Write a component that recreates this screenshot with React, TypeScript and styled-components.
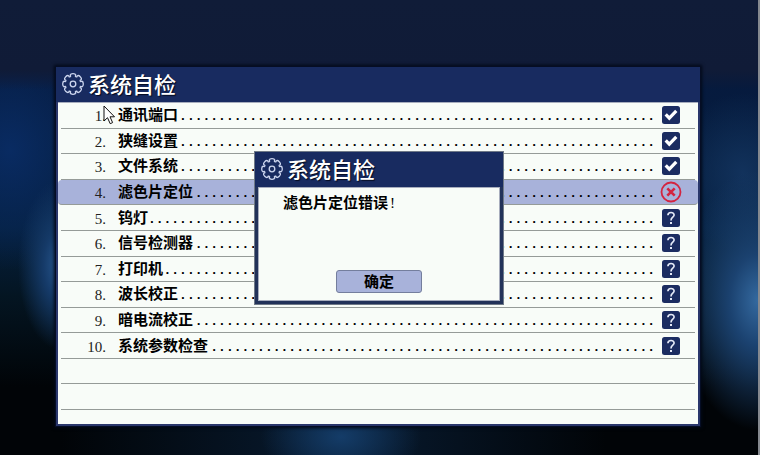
import React from "react";
import styled, { createGlobalStyle } from "styled-components";

const NAVY = "#182b60";
const PAPER = "#f8fcf8";
const ACCENT = "#a8b2da";

const GlobalStyle = createGlobalStyle`
  * { box-sizing: border-box; }
  body {
    margin: 0;
    background: #020812;
    color: #000;
    font-family: "Liberation Serif", "Noto Sans CJK SC", sans-serif;
    font-size: 15px;
    line-height: 20px;
  }
`;

const Desktop = styled.main`
  position: relative;
  display: flex;
  min-height: 100vh;
  padding: 66px 57px 28px 55px;
  border-right: 2px solid #85898f;
  background:
    linear-gradient(#101c38 0, #101b37 70px, rgba(16, 27, 55, 0) 90px),
    radial-gradient(ellipse 80px 130px at 100% 66%, #34699f 0, #1b4270 35%, rgba(16, 48, 88, 0) 100%),
    radial-gradient(ellipse 70px 80px at 98% 38%, #12325c 0, rgba(16, 48, 88, 0) 100%),
    radial-gradient(ellipse 42px 85px at 60px 265px, #28588f 0, #153a68 40%, rgba(14, 48, 88, 0) 100%),
    radial-gradient(ellipse 100px 120px at 10px 150px, #092b62 0, rgba(8, 36, 80, 0) 100%),
    radial-gradient(ellipse 80px 50px at 45% 96%, #143c68 0, rgba(12, 44, 84, 0) 100%),
    linear-gradient(90deg, rgba(0, 3, 8, 0) 8%, rgba(9, 30, 54, 0.9) 45%, rgba(0, 3, 8, 0) 80%),
    linear-gradient(#061a3e 80px, #05203f 50%, #041522 65%, #010407 85%);
`;

const Window = styled.section`
  display: flex;
  flex: 1;
  flex-direction: column;
  min-width: 0;
  padding: 0 2px 2px;
  border: 1px solid #050d24;
  background: #2a376c;
  box-shadow: 0 0 3px 1px #020817;
`;

const TitleBar = styled.header`
  display: flex;
  align-items: flex-start;
  gap: 3px;
  height: 35px;
  margin: 0 -2px;
  padding: 1px 0 0 5px;
  background: ${NAVY};
  color: #fff;
`;

const Title = styled.h1`
  margin: 0;
  font: 500 22px/30px "Noto Sans CJK SC", sans-serif;
  text-shadow: 1px 1px 1px #050b20;
`;

const CheckList = styled.ol`
  display: grid;
  flex: 1;
  grid-template-rows: repeat(12, 1fr) 14px;
  margin: 0;
  padding: 0;
  border-top: 1px solid #a7adbd;
  background: ${PAPER};
  list-style: none;
`;

const CheckRow = styled.li<{ $selected?: boolean }>`
  display: grid;
  grid-template-columns: 45px auto minmax(0, 1fr) 32px;
  align-items: center;
  min-width: 0;
  margin: ${(p) => (p.$selected ? "0" : "0 3px")};
  padding: ${(p) => (p.$selected ? "0 11px 0 3px" : "0 8px 0 0")};
  border-bottom: 1px solid #959b98;
  border-radius: ${(p) => (p.$selected ? "4px" : "0")};
  background: ${(p) => (p.$selected ? ACCENT : "transparent")};
`;

const RowNumber = styled.span`
  padding-top: 2px;
  color: #222;
  text-align: right;
`;

const RowName = styled.span`
  padding-left: 12px;
  font-weight: 700;
  white-space: nowrap;
`;

const Leader = styled.span`
  display: flex;
  justify-content: flex-end;
  padding-top: 4px;
  overflow: hidden;
  font: 700 13px/20px "Liberation Mono", monospace;
  white-space: nowrap;
`;

const StatusSlot = styled.span`
  display: flex;
  justify-content: center;
`;

const Dialog = styled.section`
  position: absolute;
  top: 50%;
  left: 50%;
  display: flex;
  flex-direction: column;
  width: 250px;
  min-height: 154px;
  padding: 0 3px 3px;
  border: 1px solid #6f7987;
  background: #223259;
  transform: translate(-50%, -50%);
`;

const DialogTitleBar = styled(TitleBar)`
  margin: 0 -3px;
`;

const DialogBody = styled.div`
  display: flex;
  flex: 1;
  flex-direction: column;
  align-items: center;
  justify-content: space-between;
  padding: 5px 8px 7px;
  border: 1px solid #a7adbd;
  background: ${PAPER};
`;

const Message = styled.p`
  align-self: stretch;
  margin: 0;
  padding-left: 16px;
  font-weight: 700;
`;

const Mark = styled.span`
  padding-left: 2px;
  font-weight: 400;
`;

const ConfirmButton = styled.button`
  width: 86px;
  height: 23px;
  padding: 0;
  border: 1px solid #747e9d;
  border-radius: 3px;
  background: ${ACCENT};
  color: #000;
  font: 700 15px/20px "Noto Sans CJK SC", sans-serif;
`;

const Pointer = styled.svg`
  position: absolute;
  top: 105px;
  left: 103px;
`;

const GearIcon = styled.svg`
  flex: none;
  margin-top: 4px;
`;

const polar = (radius: number, degrees: number) => {
  const a = (degrees * Math.PI) / 180;
  return `${(12 + radius * Math.cos(a)).toFixed(2)} ${(12 + radius * Math.sin(a)).toFixed(2)}`;
};

const gearPath =
  Array.from({ length: 8 }, (_, i) => {
    const c = i * 45;
    return `${i ? "L" : "M"}${polar(8.1, c - 17)} L${polar(9.4, c - 17)} Q${polar(10.6, c - 13)} ${polar(10.3, c)} Q${polar(10.6, c + 13)} ${polar(9.4, c + 17)} L${polar(8.1, c + 17)} Q${polar(7.4, c + 22.5)} ${polar(8.1, c + 28)}`;
  }).join(" ") + "Z";

const Gear = () => (
  <GearIcon width="24" height="24" viewBox="0 0 24 24" fill="none" stroke="#ccd5ee" strokeWidth="1.3" strokeLinejoin="round" aria-hidden="true">
    <path d={gearPath} />
    <circle cx="12" cy="12" r="2.8" />
  </GearIcon>
);

type Status = "ok" | "error" | "pending";

const StatusIcon = ({ status }: { status: Status }) => {
  if (status === "error") {
    return (
      <svg width="22" height="22" viewBox="0 0 22 22" fill="none" stroke="#d32440" role="img" aria-label="错误">
        <circle cx="11" cy="11" r="9.5" strokeWidth="1.8" />
        <path d="M7.3 7.3l7.4 7.4M14.7 7.3l-7.4 7.4" strokeWidth="2.6" />
      </svg>
    );
  }
  return (
    <svg width="18" height="18" viewBox="0 0 18 18" fill="none" role="img" aria-label={status === "ok" ? "通过" : "待检"}>
      <rect width="18" height="18" rx="2.5" fill="#1b2c61" />
      {status === "ok" ? (
        <path d="M3.7 8.4l3.6 3.8 7-7.3" stroke="#fff" strokeWidth="3.2" />
      ) : (
        <>
          <path d="M5.9 6.2C6 2.6 12.1 2.6 12.1 6.1C12.1 8.2 9 8.4 9 11.4" stroke="#e4e9f7" strokeWidth="1.7" />
          <rect x="8" y="13" width="2" height="2" fill="#e4e9f7" />
        </>
      )}
    </svg>
  );
};

const checks: { name: string; status: Status }[] = [
  { name: "通讯端口", status: "ok" },
  { name: "狭缝设置", status: "ok" },
  { name: "文件系统", status: "ok" },
  { name: "滤色片定位", status: "error" },
  { name: "钨灯", status: "pending" },
  { name: "信号检测器", status: "pending" },
  { name: "打印机", status: "pending" },
  { name: "波长校正", status: "pending" },
  { name: "暗电流校正", status: "pending" },
  { name: "系统参数检查", status: "pending" },
];

const leaderDots = (name: string) => ".".repeat(69 - name.length * 2);

export default function App() {
  return (
    <>
      <GlobalStyle />
      <Desktop>
        <Window>
          <TitleBar>
            <Gear />
            <Title>系统自检</Title>
          </TitleBar>
          <CheckList>
            {checks.map((check, i) => (
              <CheckRow key={check.name} $selected={check.status === "error"}>
                <RowNumber>{i + 1}.</RowNumber>
                <RowName>{check.name}</RowName>
                <Leader aria-hidden="true">{leaderDots(check.name)}</Leader>
                <StatusSlot>
                  <StatusIcon status={check.status} />
                </StatusSlot>
              </CheckRow>
            ))}
            <CheckRow aria-hidden="true" />
            <CheckRow aria-hidden="true" />
          </CheckList>
        </Window>
        <Dialog role="alertdialog" aria-labelledby="dialog-title" aria-describedby="dialog-message">
          <DialogTitleBar>
            <Gear />
            <Title as="h2" id="dialog-title">系统自检</Title>
          </DialogTitleBar>
          <DialogBody>
            <Message id="dialog-message">
              滤色片定位错误<Mark>!</Mark>
            </Message>
            <ConfirmButton type="button">确定</ConfirmButton>
          </DialogBody>
        </Dialog>
        <Pointer width="13" height="20" viewBox="0 0 13 20" aria-hidden="true">
          <path d="M1 1v15l3.5-3.3 2.7 6 2.4-1.1-2.6-5.8h4.5z" fill="#fff" stroke="#111" strokeWidth="1" />
        </Pointer>
      </Desktop>
    </>
  );
}
